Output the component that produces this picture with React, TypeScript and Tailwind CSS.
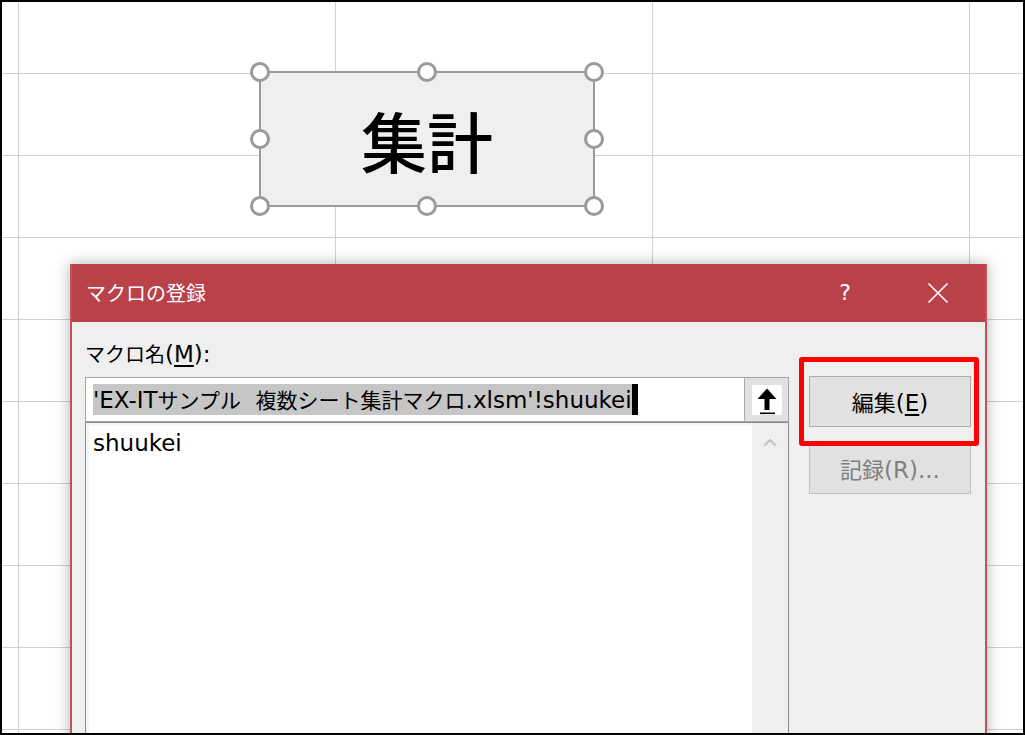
import React from "react";

const JP = { fontFamily: '"Noto Sans CJK JP", sans-serif' } as const;
const LAT = { fontFamily: '"DejaVu Sans", "Noto Sans CJK JP", sans-serif' } as const;

function Mixed({ text }: { text: string }) {
  const parts = text.match(/[\u3000-\u30ff\u4e00-\u9fff]+|[^\u3000-\u30ff\u4e00-\u9fff]+/g) || [];
  return (
    <>
      {parts.map((p, i) =>
        /[\u3000-\u30ff\u4e00-\u9fff]/.test(p) ? (
          <span key={i} className="text-[21px]" style={JP}>{p}</span>
        ) : (
          <span key={i} className="text-[23px]" style={LAT}>{p}</span>
        )
      )}
    </>
  );
}

function Grid() {
  const xs = [16, 333, 650, 967];
  const ys = [71, 153, 235, 317, 399, 481, 563, 645, 727];
  return (
    <svg className="absolute inset-0" width="1021" height="731" viewBox="0 0 1021 731">
      {xs.map((x) => (
        <line key={"x" + x} x1={x + 0.5} y1={0} x2={x + 0.5} y2={731} stroke="#d0d0d0" strokeWidth="1" />
      ))}
      {ys.map((y) => (
        <line key={"y" + y} x1={0} y1={y + 0.5} x2={1021} y2={y + 0.5} stroke="#d0d0d0" strokeWidth="1" />
      ))}
    </svg>
  );
}

function Handle({ x, y }: { x: number; y: number }) {
  return (
    <div
      className="absolute w-[20px] h-[20px] rounded-full bg-white border-[3px] border-[#9a9a9a]"
      style={{ left: x - 10, top: y - 10 }}
    />
  );
}

function Shape() {
  const pts: [number, number][] = [
    [1, 1], [168, 1], [335, 1],
    [1, 68], [335, 68],
    [1, 135], [168, 135], [335, 135],
  ];
  return (
    <div className="absolute left-[257px] top-[69px] w-[336px] h-[136px]">
      <div className="w-full h-full border-2 border-[#9a9a9a] bg-[#efefef] flex items-center justify-center">
        <span className="text-[66px] leading-none font-medium text-black" style={JP}>集計</span>
      </div>
      {pts.map(([x, y], i) => (
        <Handle key={i} x={x} y={y} />
      ))}
    </div>
  );
}

function UpArrow() {
  return (
    <svg width="30" height="30" viewBox="0 0 30 30">
      <polygon points="15,3.5 5.5,14 12.5,14 12.5,25 17.5,25 17.5,14 24.5,14" fill="#000" />
      <rect x="8" y="27.5" width="15" height="1.6" fill="#000" />
    </svg>
  );
}

function Dialog() {
  return (
    <div className="absolute left-[68px] top-[262px] w-[917px] h-[480px] bg-[#efefef] border-x-2 border-[#c4505a] shadow-[0_0_14px_rgba(0,0,0,0.3)] flex flex-col">
      <div className="h-[58px] bg-[#b9414a] flex items-center text-white">
        <span className="pl-[14px] text-[20px] leading-none flex-1" style={JP}>マクロの登録</span>
        <div className="w-[46px] flex justify-center text-[22px] leading-none" style={LAT}>?</div>
        <div className="w-[46px] ml-[47px] mr-[24px] flex justify-center">
          <svg width="22" height="22" viewBox="0 0 22 22">
            <path d="M1.5 1.5 L20.5 20.5 M20.5 1.5 L1.5 20.5" stroke="#fff" strokeWidth="1.6" />
          </svg>
        </div>
      </div>
      <div className="flex pl-[13px] pr-[14px] pt-[18px] flex-1">
        <div className="w-[704px] flex flex-col">
          <div className="leading-[28px] text-black">
            <span className="text-[20px]" style={JP}>マクロ名</span>
            <span className="text-[23px]" style={LAT}>(<span className="underline underline-offset-[3px]">M</span>):</span>
          </div>
          <div className="mt-[7px] h-[45px] border border-[#a5a5a5] bg-white flex">
            <div className="flex-1 pl-[7px] pt-[6px]">
              <span className="inline-block align-top h-[31px] leading-[31px] bg-[#c6c6c6] whitespace-pre text-black">
                <Mixed text={"'EX-ITサンプル  複数シート集計マクロ.xlsm'!shuukei"} />
              </span>
              <span className="inline-block align-top w-[6px] h-[31px] bg-black" />
            </div>
            <div className="w-[44px] bg-[#e1e1e1] border-l border-[#adadad] flex items-center justify-center">
              <div className="w-[30px] h-[30px] bg-white">
                <UpArrow />
              </div>
            </div>
          </div>
          <div className="flex-1 border-x border-t border-[#8a8d94] flex">
            <div className="flex-1 bg-white border-l-[3px] border-t-[3px] border-[#f4f4f4] pl-[4px] pt-[3px]">
              <div className="text-[23px] leading-[28px] text-black" style={LAT}>shuukei</div>
            </div>
            <div className="w-[36px] bg-[#efefef] flex justify-center pt-[15px]">
              <svg width="14" height="9" viewBox="0 0 14 9">
                <path d="M1.5 7.5 L7 2 L12.5 7.5" stroke="#c2c2c2" strokeWidth="2" fill="none" />
              </svg>
            </div>
          </div>
        </div>
        <div className="ml-[20px] w-[162px] flex flex-col gap-[16px] pt-[36px]">
          <div className="relative">
            <div className="h-[51px] bg-[#e1e1e1] border border-[#adadad] flex items-baseline justify-center pt-[10px] leading-[28px] text-black">
              <span className="text-[22px]" style={JP}>編集</span>
              <span className="text-[23px]" style={LAT}>(<span className="underline underline-offset-[3px]">E</span>)</span>
            </div>
            <div className="absolute left-[-10px] right-[-8px] top-[-19px] bottom-[-19px] border-[5px] border-[#ff0000] rounded-[3px]" />
          </div>
          <div className="h-[51px] bg-[#e1e1e1] border border-[#c0c0c0] flex items-baseline justify-center pt-[10px] leading-[28px] text-[#7f7f7f]">
            <span className="text-[22px]" style={JP}>記録</span>
            <span className="text-[23px]" style={LAT}>(R)...</span>
          </div>
        </div>
      </div>
    </div>
  );
}

export default function App() {
  return (
    <div className="w-[1025px] h-[735px] relative overflow-hidden border-2 border-black bg-white">
      <Grid />
      <Shape />
      <Dialog />
    </div>
  );
}
